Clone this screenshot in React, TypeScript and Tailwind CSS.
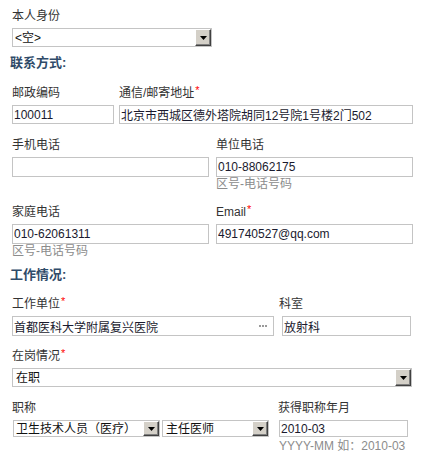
import type { ReactNode } from "react";

const FONT = "font-['Liberation_Sans','Noto_Sans_CJK_SC',sans-serif]";

function Req() {
  return <span className="relative -top-[3px] ml-[1px] text-[11px] text-[#ff0000]">*</span>;
}

function Label({ children }: { children: ReactNode }) {
  return <div className="h-[16px] whitespace-nowrap leading-[16px] text-[#333]">{children}</div>;
}

function Hint({ children }: { children: ReactNode }) {
  return <div className="h-[14px] whitespace-nowrap leading-[14px] text-[#8c8c8c]">{children}</div>;
}

function TextBox({ value = "", className = "" }: { value?: string; className?: string }) {
  return (
    <input
      readOnly
      value={value}
      className={`block border border-[#c4c4c4] bg-white px-[1px] text-[12px] text-[#1a1a2e] outline-none ${className}`}
    />
  );
}

function Dropdown({ value, className = "", pad = "pl-[2px]" }: { value: string; className?: string; pad?: string }) {
  return (
    <div className={`flex items-stretch border border-[#c4c4c4] bg-white ${className}`}>
      <span className={`flex flex-1 items-center overflow-hidden whitespace-nowrap text-[#111] ${pad}`}>{value}</span>
      <span className="flex w-[16px] items-center justify-center border border-t-white border-l-white border-r-[#404040] border-b-[#404040] bg-[#d4d0c8] shadow-[inset_-1px_-1px_0_#808080]">
        <svg width="7" height="4" viewBox="0 0 7 4">
          <polygon points="0,0 7,0 3.5,4" fill="#000" />
        </svg>
      </span>
    </div>
  );
}

function Heading({ children, className = "" }: { children: ReactNode; className?: string }) {
  return (
    <h3 className={`-ml-[2px] h-[16px] text-[13px] font-bold leading-[16px] text-[#2f4b69] ${className}`}>{children}</h3>
  );
}

export default function App() {
  return (
    <div className={`h-[455px] w-[428px] overflow-hidden bg-white pl-[12px] pt-[8px] text-[12px] ${FONT}`}>
      {/* 本人身份 */}
      <Label>本人身份</Label>
      <Dropdown value="<空>" className="mt-[4px] h-[19px] w-[200px]" />

      <Heading className="mt-[8px]">联系方式:</Heading>

      <div className="mt-[14px] flex gap-[5px]">
        <div className="w-[102px]">
          <Label>邮政编码</Label>
          <TextBox value="100011" className="mt-[4px] h-[19px] w-full" />
        </div>
        <div className="w-[294px]">
          <Label>通信/邮寄地址<Req /></Label>
          <TextBox value="北京市西城区德外塔院胡同12号院1号楼2门502" className="mt-[4px] h-[19px] w-full" />
        </div>
      </div>

      <div className="mt-[13px] flex items-start gap-[7px]">
        <div className="w-[197px]">
          <Label>手机电话</Label>
          <TextBox className="mt-[4px] h-[20px] w-full" />
        </div>
        <div className="w-[197px]">
          <Label>单位电话</Label>
          <TextBox value="010-88062175" className="mt-[4px] h-[20px] w-full" />
          <Hint>区号-电话号码</Hint>
        </div>
      </div>

      <div className="mt-[13px] flex items-start gap-[7px]">
        <div className="w-[197px]">
          <Label>家庭电话</Label>
          <TextBox value="010-62061311" className="mt-[4px] h-[20px] w-full" />
          <Hint>区号-电话号码</Hint>
        </div>
        <div className="w-[197px]">
          <Label>Email<Req /></Label>
          <TextBox value="491740527@qq.com" className="mt-[4px] h-[20px] w-full" />
        </div>
      </div>

      <Heading className="mt-[9px]">工作情况:</Heading>

      <div className="mt-[13px] flex">
        <div className="w-[262px]">
          <Label>工作单位<Req /></Label>
          <div className="relative mt-[4px]">
            <TextBox value="首都医科大学附属复兴医院" className="h-[20px] w-full pr-[20px]" />
            {/* picker dots */}
            <div className="absolute right-[7px] top-[9px] flex gap-[1px]">
              <span className="h-[2px] w-[2px] bg-[#9a9a9a]" />
              <span className="h-[2px] w-[2px] bg-[#9a9a9a]" />
              <span className="h-[2px] w-[2px] bg-[#9a9a9a]" />
            </div>
          </div>
        </div>
        <div className="ml-[5px] w-[132px]">
          <Label>科室</Label>
          <TextBox value="放射科" className="ml-[3px] mt-[4px] h-[20px] w-[129px]" />
        </div>
      </div>

      <div className="mt-[12px]">
        <Label>在岗情况<Req /></Label>
        <Dropdown value="在职" pad="pl-[3px]" className="mt-[4px] h-[19px] w-[400px]" />
      </div>

      <div className="mt-[13px] flex">
        <div className="w-[266px]">
          <Label>职称</Label>
          <div className="ml-[1px] mt-[4px] flex gap-[2px]">
            <Dropdown value="卫生技术人员（医疗）" pad="pl-[2px]" className="h-[17px] w-[147px]" />
            <Dropdown value="主任医师" pad="pl-[3px]" className="h-[17px] w-[107px]" />
          </div>
        </div>
        <div>
          <Label>获得职称年月</Label>
          <TextBox value="2010-03" className="ml-[1px] mt-[4px] h-[17px] w-[129px]" />
          <div className="ml-[1px] mt-[2px]">
            <Hint>YYYY-MM 如：2010-03</Hint>
          </div>
        </div>
      </div>
    </div>
  );
}
